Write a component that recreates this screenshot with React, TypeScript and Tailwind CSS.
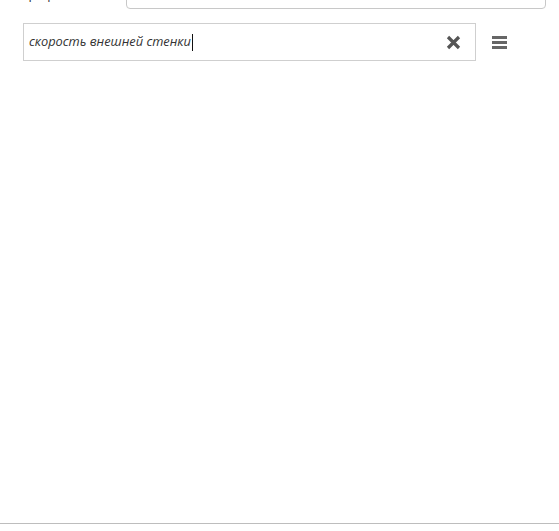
import React from 'react';

export default function App() {
  return (
    <div className="relative h-[531px] w-[559px] overflow-hidden bg-white font-['Open_Sans',sans-serif] text-[#333]">
      {/* Cut-off field row at the top */}
      <div className="-mt-[22px] flex items-end">
        <div className="w-[126px] pl-[19px] pb-[6px] text-[13px] leading-[18px] text-[#333]">Профиль</div>
        <div className="h-[31px] w-[420px] rounded-[4px] border border-[#c8c8c8] bg-white" />
      </div>

      {/* Search row */}
      <div className="mt-[14px] flex items-center pl-[23px]">
        <div className="flex h-[38px] w-[453px] items-center border border-[#cfcfcf] bg-white pl-[5px] pr-[14px]">
          <div className="flex flex-1 items-center text-[12.8px] italic text-[#333]">
            <span>скорость внешней стенки</span>
            <span className="ml-px inline-block h-[17px] w-px bg-[#111]" />
          </div>
          <svg width="15" height="15" viewBox="0 0 15 15" className="shrink-0">
            <path d="M2 2 L13 13 M13 2 L2 13" stroke="#555" strokeWidth="3.2" strokeLinecap="butt" />
          </svg>
        </div>
        <div className="ml-[16px] flex flex-col gap-[2px]">
          <span className="block h-[3px] w-[15px] bg-[#666]" />
          <span className="block h-[3px] w-[15px] bg-[#666]" />
          <span className="block h-[3px] w-[15px] bg-[#666]" />
        </div>
      </div>

      <div className="absolute bottom-[7px] left-0 right-0 h-px bg-[#bdbdbd]" />
    </div>
  );
}
